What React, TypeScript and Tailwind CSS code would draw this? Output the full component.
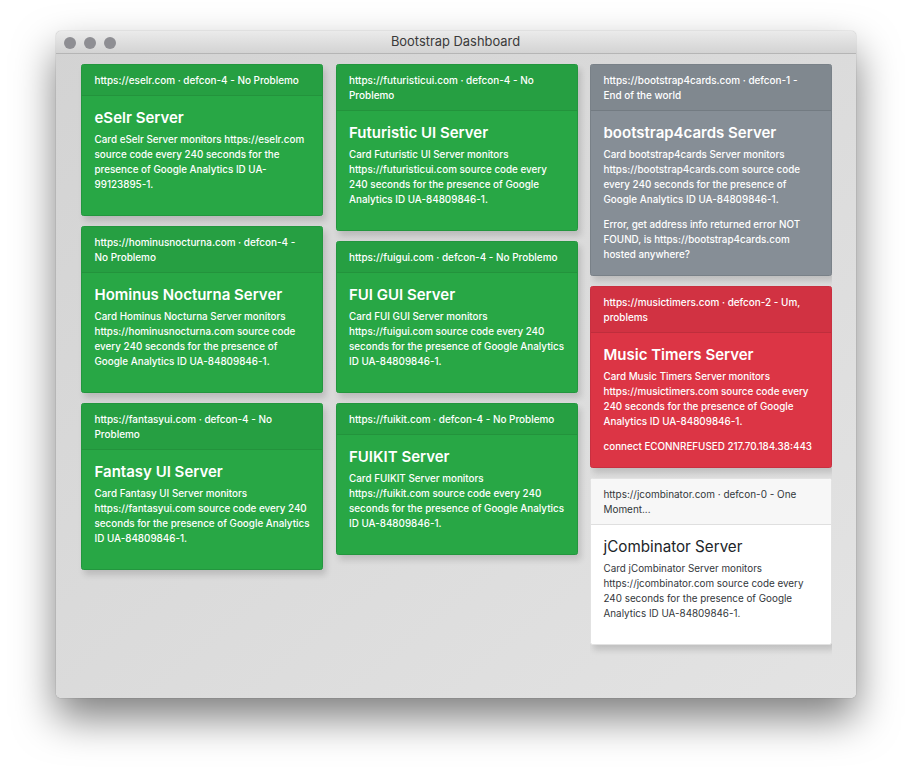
const cols = [
  [
    { h: "https://eselr.com · defcon-4 - No Problemo", t: "eSelr Server", b: "Card eSelr Server monitors https://eselr.com source code every 240 seconds for the presence of Google Analytics ID UA-99123895-1.", k: "g" },
    { h: "https://hominusnocturna.com · defcon-4 - No Problemo", t: "Hominus Nocturna Server", b: "Card Hominus Nocturna Server monitors https://hominusnocturna.com source code every 240 seconds for the presence of Google Analytics ID UA-84809846-1.", k: "g" },
    { h: "https://fantasyui.com · defcon-4 - No Problemo", t: "Fantasy UI Server", b: "Card Fantasy UI Server monitors https://fantasyui.com source code every 240 seconds for the presence of Google Analytics ID UA-84809846-1.", k: "g" },
  ],
  [
    { h: "https://futuristicui.com · defcon-4 - No Problemo", t: "Futuristic UI Server", b: "Card Futuristic UI Server monitors https://futuristicui.com source code every 240 seconds for the presence of Google Analytics ID UA-84809846-1.", k: "g" },
    { h: "https://fuigui.com · defcon-4 - No Problemo", t: "FUI GUI Server", b: "Card FUI GUI Server monitors https://fuigui.com source code every 240 seconds for the presence of Google Analytics ID UA-84809846-1.", k: "g" },
    { h: "https://fuikit.com · defcon-4 - No Problemo", t: "FUIKIT Server", b: "Card FUIKIT Server monitors https://fuikit.com source code every 240 seconds for the presence of Google Analytics ID UA-84809846-1.", k: "g" },
  ],
  [
    { h: "https://bootstrap4cards.com · defcon-1 - End of the world", t: "bootstrap4cards Server", b: "Card bootstrap4cards Server monitors https://bootstrap4cards.com source code every 240 seconds for the presence of Google Analytics ID UA-84809846-1.", e: "Error, get address info returned error NOT FOUND, is https://bootstrap4cards.com hosted anywhere?", k: "s" },
    { h: "https://musictimers.com · defcon-2 - Um, problems", t: "Music Timers Server", b: "Card Music Timers Server monitors https://musictimers.com source code every 240 seconds for the presence of Google Analytics ID UA-84809846-1.", e: "connect ECONNREFUSED 217.70.184.38:443", k: "r" },
    { h: "https://jcombinator.com · defcon-0 - One Moment...", t: "jCombinator Server", b: "Card jCombinator Server monitors https://jcombinator.com source code every 240 seconds for the presence of Google Analytics ID UA-84809846-1.", k: "w" },
  ],
];

const styles: Record<string, { card: string; head: string; title: string }> = {
  g: { card: "bg-[#28a745] border-[#23963e] text-white font-medium", head: "bg-[#269f42] border-[#23933c]", title: "font-semibold text-[15px]" },
  s: { card: "bg-[#868e96] border-[#798188] text-white font-medium", head: "bg-[#80888f] border-[#737b82]", title: "font-semibold text-[15px]" },
  r: { card: "bg-[#dc3545] border-[#c83040] text-white font-medium", head: "bg-[#d13242] border-[#bf2e3c]", title: "font-semibold text-[15px]" },
  w: { card: "bg-white border-[#e2e2e2] text-[#33373b]", head: "bg-[#f7f7f7] border-[#dfdfdf]", title: "font-normal text-[15.2px] text-[#212529]" },
};

export default function App() {
  return (
    <div className="min-h-[778px] bg-white pt-[31px] pl-[56px] font-['Inter',sans-serif]">
      <div className="flex h-[667px] w-[800px] flex-col rounded-[5px] bg-gradient-to-br from-[#d3d3d3] to-[#e3e3e3] shadow-[0_20px_40px_rgba(0,0,0,0.5),0_0_1px_rgba(0,0,0,0.5)]">
        <div className="relative flex h-[23px] shrink-0 items-center justify-center rounded-t-[5px] border-b border-[#b5b5b5] bg-gradient-to-b from-[#ebebeb] to-[#d3d3d3]">
          <div className="absolute left-[8px] top-[6px] flex gap-2">
            <span className="h-3 w-3 rounded-full bg-[#8e8e93]" />
            <span className="h-3 w-3 rounded-full bg-[#8e8e93]" />
            <span className="h-3 w-3 rounded-full bg-[#8e8e93]" />
          </div>
          <span className="-ml-[1px] text-[12.9px] text-[#3a3a3a]">Bootstrap Dashboard</span>
        </div>
        <div className="ml-[25px] mt-[10px] flex w-[751px] gap-[12.5px]">
          {cols.map((col, i) => (
            <div key={i} className={`flex w-[242px] flex-col gap-[10px] ${i === 2 ? "overflow-x-clip" : ""}`}>
              {col.map((c) => (
                <div key={c.t} className={`rounded-[2.5px] border shadow-[3px_5px_6px_rgba(0,0,0,0.14)] ${styles[c.k].card}`}>
                  <div className={`border-b py-[7.5px] pl-[12.5px] pr-[15px] text-[9.93px] leading-[15px] ${styles[c.k].head}`}>{c.h}</div>
                  <div className="px-[12.5px] py-[13px] text-[9.85px] leading-[15px]">
                    <h5 className={`mb-[5px] leading-[18px] ${styles[c.k].title}`}>{c.t}</h5>
                    <p className="mb-[10px]">{c.b}</p>
                    {c.e && <p>{c.e}</p>}
                  </div>
                </div>
              ))}
            </div>
          ))}
        </div>
      </div>
    </div>
  );
}
